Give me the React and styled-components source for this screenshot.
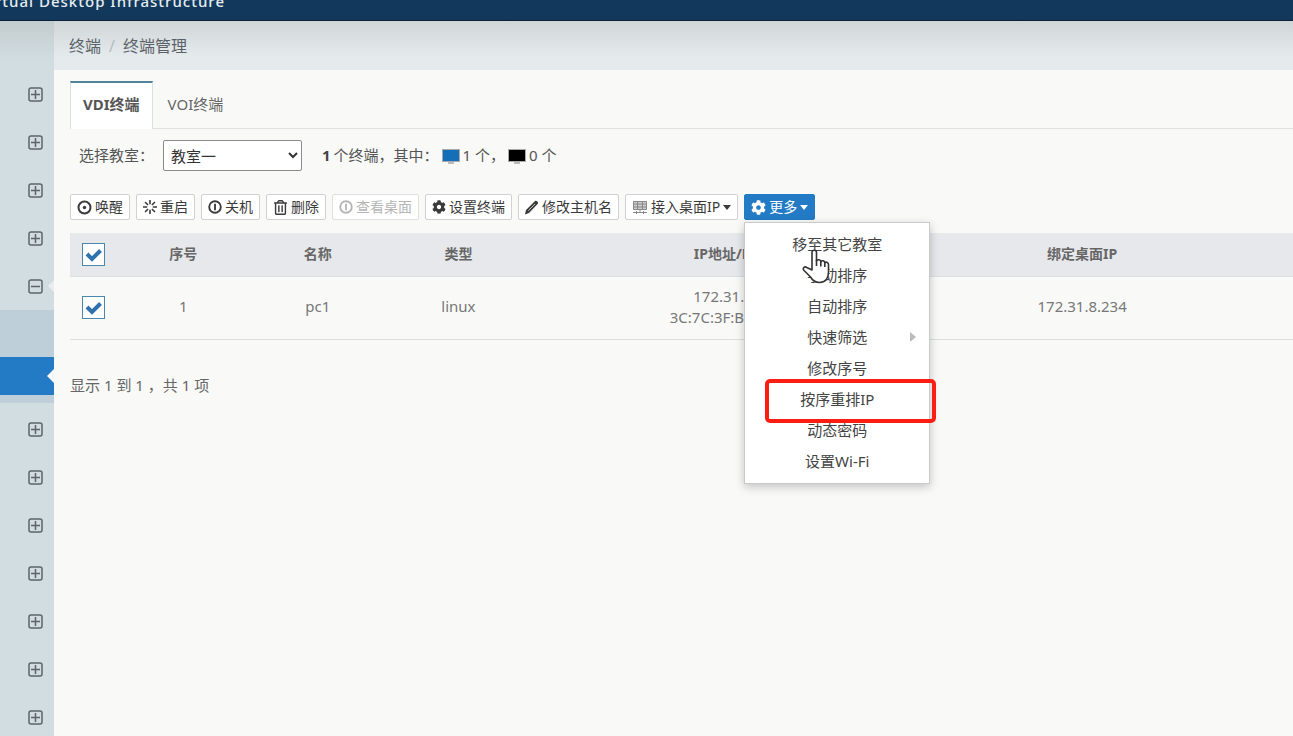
import styled, { createGlobalStyle, css } from "styled-components";
import { FaCog, FaRegTrashAlt } from "react-icons/fa";

const GlobalStyle = createGlobalStyle`
  * {
    box-sizing: border-box;
  }
  body {
    margin: 0;
    background: #f9faf8;
    color: #555;
    font-family: "Noto Sans", "Noto Sans CJK SC", sans-serif;
    font-size: 15px;
    line-height: 21px;
  }
  button, select {
    font-family: inherit;
  }
`;

const Page = styled.div`
  min-height: 100vh;
  display: flex;
  flex-direction: column;
  overflow: hidden;
`;

const TopBar = styled.header`
  height: 21px;
  background: #12395b;
  border-bottom: 1px solid #0b2236;
  display: flex;
  align-items: flex-end;
  overflow: hidden;
  color: #e6edf2;
`;

const Slogan = styled.div`
  width: 225px;
  display: flex;
  justify-content: flex-end;
  padding-bottom: 9px;
  font-size: 15px;
  font-weight: 500;
  line-height: 20px;
  letter-spacing: 1px;
  white-space: nowrap;
`;

const Body = styled.div`
  flex: 1;
  display: flex;
`;

const Sidebar = styled.nav`
  width: 54px;
  flex-shrink: 0;
  padding-top: 49px;
  background: linear-gradient(#c3cdd0, #d2dde1 40px);
`;

const SideItem = styled.button`
  width: 100%;
  height: 48px;
  padding: 0 11px 0 0;
  border: 0;
  background: none;
  color: #5c6669;
  display: flex;
  align-items: center;
  justify-content: flex-end;
  position: relative;
`;

const Notch = styled.span`
  position: absolute;
  right: 0;
  top: calc(50% - ${(p) => p.$size}px);
  border: ${(p) => p.$size}px solid transparent;
  border-left: 0;
  border-right-color: ${(p) => p.$color};
`;

const SubMenu = styled.div`
  height: 93px;
  margin-bottom: 2px;
  padding-top: 47px;
  background: #bfcfd9;
`;

const SubItem = styled.a`
  display: block;
  height: 38px;
  background: #227bc4;
  position: relative;
`;

const Main = styled.main`
  flex: 1;
  min-width: 0;
  display: flex;
  flex-direction: column;
`;

const Breadcrumb = styled.div`
  height: 49px;
  padding: 2px 15px 0;
  display: flex;
  align-items: center;
  gap: 8px;
  font-size: 16px;
  background: linear-gradient(#d0d5d7, #e5eaed 36px);
  color: #5a6268;

  a {
    color: inherit;
    text-decoration: none;
  }
  span {
    color: #b5bdc2;
  }
`;

const Content = styled.div`
  flex: 1;
  padding: 11px 0 0 16px;
  background: #f9faf8;
`;

const Tabs = styled.div`
  height: 48px;
  display: flex;
  border-bottom: 1px solid #dfe2e3;
`;

const Tab = styled.button`
  height: 48px;
  padding: 0 15px 4px;
  border: 0;
  background: none;
  font-size: 15px;
  color: #666;
  ${(p) =>
    p.$active &&
    css`
      padding: 0 12px 5px;
      background: #fff;
      border: 1px solid #dadfe1;
      border-top: 2px solid #4f8398;
      border-bottom: 0;
      font-weight: 700;
      color: #555;
    `}
`;

const Filter = styled.div`
  margin-top: 11px;
  padding-left: 9px;
  display: flex;
  align-items: center;
`;

const Label = styled.label`
  width: 84px;
`;

const Select = styled.select`
  width: 139px;
  height: 31px;
  padding: 0 3px;
  border: 1px solid #8c8c8c;
  border-radius: 2px;
  background: #fff;
  color: #333;
  font-size: 15px;
`;

const Summary = styled.div`
  margin-left: 20px;
  display: flex;
  align-items: center;
  gap: 3px;
  b {
    color: #444;
  }
`;

const Toolbar = styled.div`
  margin-top: 23px;
  display: flex;
  gap: 6px;
`;

const ToolButton = styled.button`
  height: 26px;
  padding: 0 6px;
  border: 1px solid #cfd2d3;
  border-radius: 2px;
  background: #fff;
  color: #3a3a3a;
  font-size: 14px;
  line-height: 20px;
  display: flex;
  align-items: center;
  gap: 3px;
  white-space: nowrap;

  &:disabled {
    color: #b5b5b5;
    border-color: #dfe1e1;
  }
  ${(p) =>
    p.$primary &&
    css`
      background: #227bc4;
      border-color: #227bc4;
      color: #fff;
    `}
`;

const Caret = styled.span`
  border: 4px solid transparent;
  border-top: 5px solid currentColor;
  border-bottom: 0;
`;

const Dropdown = styled.div`
  position: relative;
`;

const Menu = styled.ul`
  position: absolute;
  z-index: 2;
  top: 28px;
  left: 0;
  width: 186px;
  margin: 0;
  padding: 5px 0 7px;
  list-style: none;
  background: #fff;
  border: 1px solid #c8cbcc;
  box-shadow: 0 3px 9px #00000038;
`;

const MenuItem = styled.button`
  display: block;
  width: 100%;
  height: 31px;
  padding: 0 0 1px;
  border: 0;
  background: none;
  color: #444;
  font-size: 15px;
  text-align: center;
  position: relative;
`;

const SubArrow = styled.span`
  position: absolute;
  right: 13px;
  top: 11px;
  border: 5px solid transparent;
  border-left: 6px solid #bbb;
  border-right: 0;
`;

const Highlight = styled.div`
  position: absolute;
  left: 20px;
  top: 156px;
  width: 171px;
  height: 44px;
  border: 4px solid #fb1d12;
  border-radius: 5px;
  pointer-events: none;
`;

const Pointer = styled.svg`
  position: absolute;
  left: 57px;
  top: 26px;
`;

const Table = styled.table`
  width: 100%;
  margin-top: 13px;
  table-layout: fixed;
  border-collapse: collapse;
  text-align: center;

  tr {
    border-bottom: 1px solid #dcdfe0;
  }
  th {
    height: 43px;
    padding: 0 0 2px;
    background: #e6e8eb;
    font-size: 14px;
    color: #666;
  }
  td {
    height: 63px;
    padding: 0 0 2px;
    color: #777;
  }
`;

const Col = styled.col`
  width: ${(p) => p.$width};
`;

const CheckBox = styled.label`
  position: relative;
  display: block;
  margin: 2px 0 0 12px;
  svg {
    position: absolute;
    left: 3px;
    top: 5px;
  }
`;

const Check = styled.input`
  appearance: none;
  display: block;
  width: 23px;
  height: 23px;
  margin: 0;
  border: 1px solid #4b86ab;
  background: #fff;
`;

const Info = styled.p`
  margin: 35px 0 0;
  color: #666;
`;

const ToggleIcon = ({ open }) => (
  <svg width="15" height="15" viewBox="0 0 15 15" fill="none" stroke="currentColor" strokeWidth="1.5">
    <rect x="1" y="1" width="13" height="13" rx="2" />
    <path d={open ? "M3 7.5h9" : "M3 7.5h9M7.5 3v9"} />
  </svg>
);

const DotIcon = () => (
  <svg width="15" height="15" viewBox="0 0 15 15">
    <circle cx="7.5" cy="7.5" r="6" fill="none" stroke="currentColor" strokeWidth="2" />
    <circle cx="7.5" cy="7.5" r="1.7" fill="currentColor" />
  </svg>
);

const PowerIcon = () => (
  <svg width="14" height="14" viewBox="0 0 15 15" fill="none" stroke="currentColor" strokeWidth="2">
    <circle cx="7.5" cy="7.5" r="6.2" />
    <path d="M7.5 4v7" />
  </svg>
);

const RestartIcon = () => (
  <svg width="14" height="14" viewBox="0 0 15 15" stroke="currentColor" strokeWidth="1.7">
    <path d="M7.5 0v4.5M7.5 10.5V15M0 7.5h4.5M10.5 7.5H15M2.2 2.2l3.2 3.2M9.6 9.6l3.2 3.2M12.8 2.2L9.6 5.4M5.4 9.6l-3.2 3.2" />
  </svg>
);

const PencilIcon = () => (
  <svg width="14" height="15" viewBox="0 0 14 15">
    <path d="M0 14.5l1-4.5L10 1c1.2-1.2 4 1.4 2.8 2.8L4 13z" fill="currentColor" />
    <path d="M3.3 10.7l6.7-6.8" stroke="#ccc" strokeWidth="1" />
  </svg>
);

const DesktopIcon = () => (
  <svg width="16" height="15" viewBox="0 0 16 15" fill="none" stroke="#888">
    <path d="M1.5 1.5h13v8h-13z" fill="#ccc" />
    <path d="M1.5 4h13M1.5 7h13M5.5 1.5v8M10.5 1.5v8M8 9.5v3M1 12.5h14M4.5 11v3M11.5 11v3" />
  </svg>
);

const Monitor = ({ color }) => (
  <svg width="18" height="16" viewBox="0 0 18 16">
    <rect x="0.5" y="1.5" width="17" height="12" fill={color} stroke="#aaa" />
    <path d="M6 15h6" stroke="#bbb" strokeWidth="2" />
  </svg>
);

const Tick = () => (
  <svg width="17" height="14" viewBox="0 0 17 14" fill="none" stroke="#2f72ad" strokeWidth="4">
    <path d="M2 6l5 5 8.5-8.5" />
  </svg>
);

const Selector = ({ label }) => (
  <CheckBox>
    <Check type="checkbox" defaultChecked aria-label={label} />
    <Tick />
  </CheckBox>
);

const HandPointer = () => (
  <Pointer
    width="28"
    height="35"
    viewBox="0 0 28 35"
    fill="#fff"
    stroke="#333"
    strokeWidth="1.6"
    strokeLinejoin="round"
  >
    <path d="M10 21V3.5c0-3 4.5-3 4.5 0V12c1-2 4-1.5 4.3.6 1-1.5 3.7-1 4 1 1.5-1 3.7 0 3.7 2V23c0 6-3 10.5-9 10.5-5 0-7-2-9-5.5L1.6 21c-1-2.2 1-4 3.2-2.5z" />
    <path d="M14.5 11v6M18.8 12.5v5M22.8 13.5v4.500" fill="none" />
  </Pointer>
);

const columns = ["46px", "11%", "11%", "12%", "33%", "24%", "auto"];

const menuItems = [
  "移至其它教室",
  "手动排序",
  "自动排序",
  "快速筛选",
  "修改序号",
  "按序重排IP",
  "动态密码",
  "设置Wi-Fi",
];

const App = () => {
  return (
    <Page>
      <GlobalStyle />
      <TopBar>
        <Slogan>Virtual Desktop Infrastructure</Slogan>
      </TopBar>
      <Body>
        <Sidebar>
          {[0, 1, 2, 3].map((i) => (
            <SideItem key={i} aria-label="展开">
              <ToggleIcon />
            </SideItem>
          ))}
          <SideItem aria-label="收起">
            <ToggleIcon open />
            <Notch $size={6} $color="#e8eef0" />
          </SideItem>
          <SubMenu>
            <SubItem href="#terminal" aria-label="终端管理">
              <Notch $size={7} $color="#f9faf8" />
            </SubItem>
          </SubMenu>
          {[0, 1, 2, 3, 4, 5, 6].map((i) => (
            <SideItem key={i} aria-label="展开">
              <ToggleIcon />
            </SideItem>
          ))}
        </Sidebar>
        <Main>
          <Breadcrumb>
            <a href="#home">终端</a>
            <span>/</span>
            <a href="#terminal">终端管理</a>
          </Breadcrumb>
          <Content>
            <Tabs>
              <Tab $active>VDI终端</Tab>
              <Tab>VOI终端</Tab>
            </Tabs>

            <Filter>
              <Label htmlFor="room">选择教室：</Label>
              <Select id="room">
                <option>教室一</option>
              </Select>
              <Summary>
                <b>1</b> 个终端，其中：
                <Monitor color="#146fb8" /> 1 个，
                <Monitor color="#000" /> 0 个
              </Summary>
            </Filter>

            <Toolbar>
              <ToolButton><DotIcon />唤醒</ToolButton>
              <ToolButton><RestartIcon />重启</ToolButton>
              <ToolButton><PowerIcon />关机</ToolButton>
              <ToolButton><FaRegTrashAlt size={15} />删除</ToolButton>
              <ToolButton disabled><PowerIcon />查看桌面</ToolButton>
              <ToolButton><FaCog size={14} />设置终端</ToolButton>
              <ToolButton><PencilIcon />修改主机名</ToolButton>
              <ToolButton><DesktopIcon />接入桌面IP<Caret /></ToolButton>
              <Dropdown>
                <ToolButton $primary><FaCog size={15} />更多<Caret /></ToolButton>
                <Menu>
                  {menuItems.map((item) => (
                    <li key={item}>
                      <MenuItem>
                        {item}
                        {item === "快速筛选" && <SubArrow />}
                      </MenuItem>
                    </li>
                  ))}
                  <Highlight />
                  <HandPointer />
                </Menu>
              </Dropdown>
            </Toolbar>

            <Table>
              <colgroup>
                {columns.map((width, i) => (
                  <Col key={i} $width={width} />
                ))}
              </colgroup>
              <thead>
                <tr>
                  <th><Selector label="全选" /></th>
                  <th>序号</th>
                  <th>名称</th>
                  <th>类型</th>
                  <th>IP地址/MAC</th>
                  <th>绑定桌面IP</th>
                  <th />
                </tr>
              </thead>
              <tbody>
                <tr>
                  <td><Selector label="pc1" /></td>
                  <td>1</td>
                  <td>pc1</td>
                  <td>linux</td>
                  <td>172.31.8.34<br />3C:7C:3F:B2:10:4D</td>
                  <td>172.31.8.234</td>
                  <td />
                </tr>
              </tbody>
            </Table>
            <Info>显示 1 到 1 ，共 1 项</Info>
          </Content>
        </Main>
      </Body>
    </Page>
  );
};

export default App;
